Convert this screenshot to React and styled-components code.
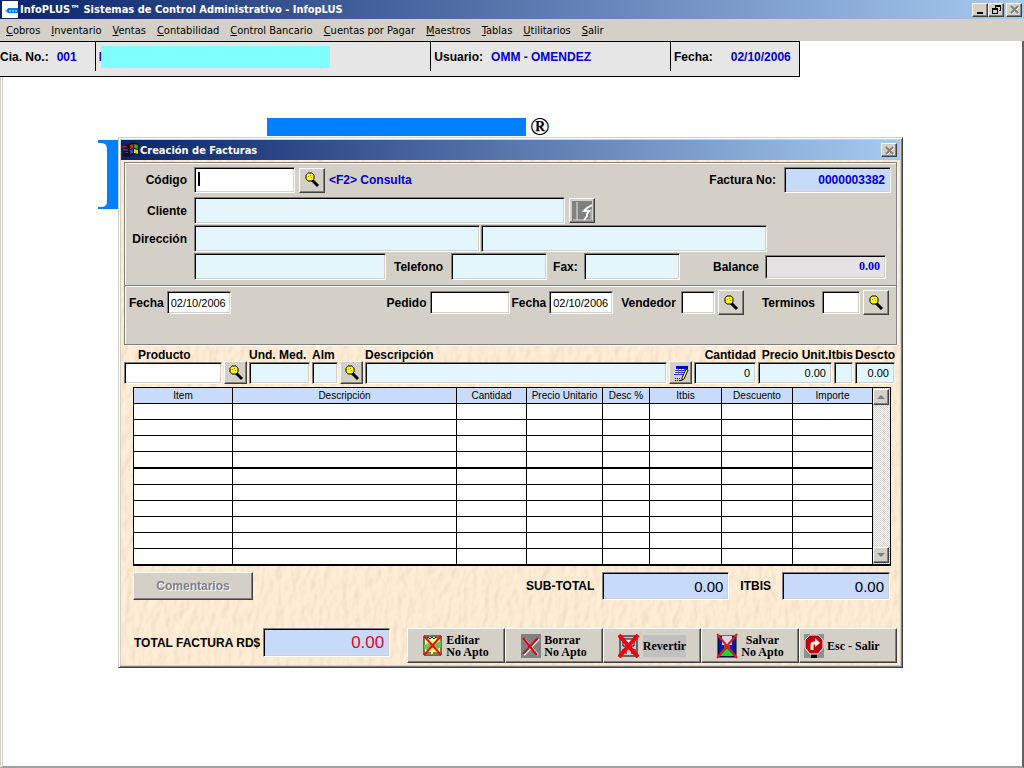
import React from 'react';
import styled, { createGlobalStyle, css } from 'styled-components';

const menus = [
  'Cobros',
  'Inventario',
  'Ventas',
  'Contabilidad',
  'Control Bancario',
  'Cuentas por Pagar',
  'Maestros',
  'Tablas',
  'Utilitarios',
  'Salir',
];

const columns = [
  { name: 'Item', width: 99 },
  { name: 'Descripción' },
  { name: 'Cantidad', width: 70 },
  { name: 'Precio Unitario', width: 76 },
  { name: 'Desc %', width: 47 },
  { name: 'Itbis', width: 72 },
  { name: 'Descuento', width: 71 },
  { name: 'Importe', width: 80 },
];

const rows = [1, 2, 3, 4, 5, 6, 7, 8, 9, 10];

function SearchIcon() {
  return (
    <svg width='16' height='16' viewBox='0 0 16 16'>
      <path d='M8 8l6 6' stroke='#000' strokeWidth='3' />
      <path
        d='M4 1h4l2 2v4L8 9H4L2 7V3z'
        fill='#ffff00'
        stroke='#000'
        strokeWidth='1'
      />
      <path d='M4 4h1v1H4zM6 3h1v1H6zM7 5h1v1H7z' fill='#808000' />
    </svg>
  );
}

function NoteIcon() {
  return (
    <svg width='18' height='18' viewBox='0 0 18 18' shapeRendering='crispEdges'>
      <path d='M4 2h12v3H4z' fill='#0000d0' />
      <path d='M3 5h12l-2 6H2z' fill='#fff' />
      <path d='M3 6h12M3 8h10M2 10h9' stroke='#2020c0' />
      <path d='M6 5v6M9 5v6M12 5v4' stroke='#6060d0' />
      <path d='M3 14h1M5 14h1M7 14h1M3 16h1M5 16h1M7 16h3' stroke='#000' />
      <path
        d='M14 5l2 1-4 9-2 1v-2z'
        fill='#ffffa0'
        stroke='#000'
        shapeRendering='auto'
      />
    </svg>
  );
}

function ClientIcon() {
  return (
    <svg width='20' height='20' viewBox='0 0 20 20'>
      <path d='M0 0h20v20H0z' fill='#808080' />
      <path d='M5 1v18' stroke='#e8e8e8' />
      <path d='M20 4l-5 3-3 3h5l-2 3v2l-3 4' fill='none' stroke='#fff' strokeWidth='2' />
      <path d='M19 8v11H1' fill='none' stroke='#d8d8d8' />
    </svg>
  );
}

function FlagIcon() {
  return (
    <svg width='17' height='16' viewBox='0 0 17 16'>
      <path d='M2 4l5-2 4-2 6 2v11l-5-1-5 3-6-1z' fill='#101018' />
      <path d='M8 3l3-1v4L8 7z' fill='#d02020' />
      <path d='M12 2l4 1v4l-4-1z' fill='#20a040' />
      <path d='M8 8l3-1v4l-3 1z' fill='#3048d0' />
      <path d='M12 7l4 1v4l-4-1z' fill='#e0d020' />
      <path d='M0 4h5v1H0zM1 7h5v1H1zM3 10h3v1H3z' fill='#a02020' />
      <path d='M0 5h4v1H0zM2 8h4v1H2z' fill='#2030a0' />
    </svg>
  );
}

function AppIcon() {
  return (
    <svg width='16' height='17' viewBox='0 0 16 17'>
      <path d='M0 0h16v17H0z' fill='#fff' />
      <path d='M6 7h10v5H6L4 10z' fill='#0080e0' />
      <path d='M7 10h2M10 10h2M13 10h2' stroke='#c0e8ff' />
      <path d='M3 10h2' stroke='#60b0f0' />
    </svg>
  );
}

function EditIcon() {
  return (
    <svg width='20' height='22' viewBox='0 0 20 22'>
      <path d='M1 1h17v19H1z' fill='#ffff90' stroke='#000' />
      <path d='M1 11l4-3 4 3 5-3 4-2v6l-5 3H5l-4-1z' fill='#60c850' />
      <path d='M3 4l2-2 2 2 2-2 2 2 2-2 3 2M3 18h5M10 18h6' stroke='#000' fill='none' />
      <path d='M5 13h9v3H5z' fill='#fff060' />
      <path d='M1 1l17 19M18 1L1 20' stroke='#e01010' strokeWidth='2' />
    </svg>
  );
}

function DeleteIcon() {
  return (
    <svg width='20' height='24' viewBox='0 0 20 24'>
      <path d='M0 0h20v24H0z' fill='#808080' />
      <path d='M3 5l14 16M18 5L3 21' stroke='#fff' strokeWidth='2' />
      <path d='M2 4l14 17M17 4L2 20' stroke='#e00010' strokeWidth='2' />
    </svg>
  );
}

function RevertIcon() {
  return (
    <svg width='22' height='24' viewBox='0 0 22 24'>
      <path d='M2 2h17v20H2z' fill='#c8c8c8' stroke='#000' />
      <path d='M5 5h11v7H5z' fill='#fff' stroke='#000' />
      <path d='M4 16h4v4M14 20v-4h4' stroke='#000' fill='none' />
      <path d='M1 1l19 22M20 1L1 23' stroke='#f00010' strokeWidth='4' />
    </svg>
  );
}

function SaveIcon() {
  return (
    <svg width='22' height='26' viewBox='0 0 22 26'>
      <path d='M2 3h18v21H2z' fill='#0818a8' stroke='#000' />
      <path d='M6 3h10v9H6z' fill='#d8d8e0' />
      <path d='M8 12h6v3H8z' fill='#5060b0' />
      <path d='M4 23l7-8 7 8z' fill='#10e020' />
      <path d='M1 1l20 24M21 1L1 25' stroke='#e81818' strokeWidth='2' />
    </svg>
  );
}

function ExitIcon() {
  return (
    <svg width='20' height='24' viewBox='0 0 20 24'>
      <path d='M0 0h20v24H0z' fill='#909090' />
      <path d='M7 20h6v4H7z' fill='#000' />
      <path d='M6 1h8l5 5v8l-5 6H6l-5-6V6z' fill='#c00010' stroke='#fff' />
      <path
        d='M8 16v-5q0-2 2-2h3'
        fill='none'
        stroke='#fff0d0'
        strokeWidth='3'
      />
      <path d='M11 4l5 5-5 4z' fill='#fff0d0' />
    </svg>
  );
}

function CloseIcon() {
  return (
    <svg width='9' height='9' viewBox='0 0 9 9'>
      <path d='M2 2l7 7M9 2L2 9' stroke='#fff' strokeWidth='1' />
      <path d='M1 1l7 7M8 1L1 8' stroke='#808080' strokeWidth='2' />
    </svg>
  );
}

// embossed paper drawn behind the form
function Paper() {
  return (
    <PaperSvg aria-hidden='true'>
      <filter
        id='paper'
        x='0'
        y='0'
        width='100%'
        height='100%'
        colorInterpolationFilters='sRGB'
      >
        <feTurbulence type='fractalNoise' baseFrequency='0.12 0.07' numOctaves='2' seed='4' />
        <feDiffuseLighting lightingColor='#ffebd2' surfaceScale='1' diffuseConstant='1.25'>
          <feDistantLight azimuth='210' elevation='53' />
        </feDiffuseLighting>
      </filter>
      <rect width='100%' height='100%' fill='#fdead2' />
      <rect width='100%' height='100%' filter='url(#paper)' opacity='0.25' />
    </PaperSvg>
  );
}

function Invoice() {
  return (
    <Dialog role='dialog' aria-labelledby='dialog-title'>
      <DialogTitle>
        <FlagIcon />
        <h2 id='dialog-title'>Creación de Facturas</h2>
        <CaptionButton aria-label='Cerrar'>
          <CloseIcon />
        </CaptionButton>
      </DialogTitle>
      <DialogBody>
        <Paper />
        <Client>
          <Line>
            <SideLabel htmlFor='codigo'>Código</SideLabel>
            <Field id='codigo' $w={101} $h={26} $caret />
            <ToolButton aria-label='Buscar cliente'>
              <SearchIcon />
            </ToolButton>
            <Hint>&lt;F2&gt; Consulta</Hint>
            <Push />
            <Label htmlFor='factura' $gap={4}>Factura No:</Label>
            <Field id='factura' $w={107} $h={26} $tone='blue' $bold readOnly defaultValue='0000003382' />
          </Line>
          <Line>
            <SideLabel htmlFor='cliente'>Cliente</SideLabel>
            <Field id='cliente' $w={371} $h={27} $tone='sky' readOnly />
            <ToolButton aria-label='Ficha del cliente'>
              <ClientIcon />
            </ToolButton>
          </Line>
          <Line>
            <SideLabel htmlFor='direccion'>Dirección</SideLabel>
            <Pair>
              <Field id='direccion' $w={286} $h={27} $tone='sky' readOnly />
              <Field aria-label='Dirección 2' $w={286} $h={27} $tone='sky' readOnly />
            </Pair>
          </Line>
          <Line>
            <SideLabel htmlFor='direccion3' aria-label='Dirección 3' />
            <Field id='direccion3' $w={192} $h={27} $tone='sky' readOnly />
            <Label htmlFor='telefono' $gap={4}>Telefono</Label>
            <Field id='telefono' $w={96} $h={27} $tone='sky' readOnly />
            <Label htmlFor='fax' $gap={2}>Fax:</Label>
            <Field id='fax' $w={96} $h={27} $tone='sky' readOnly />
            <Push />
            <Label htmlFor='balance' $gap={2}>Balance</Label>
            <Balance id='balance' $w={121} $h={24} $tone='gray' $bold readOnly defaultValue='0.00' />
          </Line>
        </Client>
        <Order>
          <Group>
            <Label htmlFor='fecha'>Fecha</Label>
            <Field id='fecha' $w={64} $h={23} $date defaultValue='02/10/2006' />
          </Group>
          <Push />
          <Group>
            <Label htmlFor='pedido'>Pedido</Label>
            <Field id='pedido' $w={80} $h={23} />
          </Group>
          <Group>
            <Label htmlFor='fecha-pedido'>Fecha</Label>
            <Field id='fecha-pedido' $w={64} $h={23} $date defaultValue='02/10/2006' />
          </Group>
          <Group $before={4}>
            <Label htmlFor='vendedor' $gap={2}>Vendedor</Label>
            <Field id='vendedor' $w={34} $h={23} />
            <ToolButton aria-label='Buscar vendedor'>
              <SearchIcon />
            </ToolButton>
          </Group>
          <Group $before={12}>
            <Label htmlFor='terminos' $gap={4}>Terminos</Label>
            <Field id='terminos' $w={38} $h={23} />
            <ToolButton aria-label='Buscar terminos'>
              <SearchIcon />
            </ToolButton>
          </Group>
        </Order>
        <Product>
          <Cell>
            <Label htmlFor='producto' $gap={14}>Producto</Label>
            <Field id='producto' $w='100%' $h={22} />
          </Cell>
          <SmallTool aria-label='Buscar producto'>
            <SearchIcon />
          </SmallTool>
          <Cell>
            <Label htmlFor='medida'>Und. Med.</Label>
            <Field id='medida' $w='100%' $h={22} $tone='sky' readOnly />
          </Cell>
          <Cell>
            <Label htmlFor='almacen'>Alm</Label>
            <Field id='almacen' $w='100%' $h={22} $tone='sky' readOnly />
          </Cell>
          <SmallTool aria-label='Buscar almacén'>
            <SearchIcon />
          </SmallTool>
          <Cell>
            <Label htmlFor='descripcion'>Descripción</Label>
            <Field id='descripcion' $w='100%' $h={22} $tone='sky' readOnly />
          </Cell>
          <SmallTool aria-label='Editar descripción'>
            <NoteIcon />
          </SmallTool>
          <Cell $align='flex-end'>
            <Label htmlFor='cantidad'>Cantidad</Label>
            <Field id='cantidad' $w='100%' $h={22} $tone='sky' $right defaultValue='0' />
          </Cell>
          <Cell $align='center'>
            <Label htmlFor='precio'>Precio Unit.</Label>
            <Field id='precio' $w='100%' $h={22} $tone='sky' $right defaultValue='0.00' />
          </Cell>
          <Cell $align='flex-end'>
            <Label htmlFor='itbis-linea'>Itbis</Label>
            <Field id='itbis-linea' $w='100%' $h={22} $tone='sky' readOnly />
          </Cell>
          <Cell $align='flex-end'>
            <Label htmlFor='descto'>Descto</Label>
            <Field id='descto' $w='100%' $h={22} $tone='sky' $right defaultValue='0.00' />
          </Cell>
        </Product>
        <Grid>
          <Table>
            <colgroup>
              {columns.map((col) => (
                <col key={col.name} width={col.width} />
              ))}
            </colgroup>
            <thead>
              <tr>
                {columns.map((col) => (
                  <th key={col.name}>{col.name}</th>
                ))}
              </tr>
            </thead>
            <tbody>
              {rows.map((row) => (
                <Row key={row} $thick={row === 4}>
                  {columns.map((col) => (
                    <td key={col.name} />
                  ))}
                </Row>
              ))}
            </tbody>
          </Table>
          <Scroll>
            <ScrollButton aria-label='Subir'>
              <svg width='8' height='4' viewBox='0 0 8 4'>
                <path d='M0 4l4-4 4 4z' fill='#808080' />
              </svg>
            </ScrollButton>
            <ScrollButton aria-label='Bajar'>
              <svg width='8' height='4' viewBox='0 0 8 4'>
                <path d='M0 0h8L4 4z' fill='#808080' />
              </svg>
            </ScrollButton>
          </Scroll>
        </Grid>
        <Summary>
          <Comments disabled>Comentarios</Comments>
          <Push />
          <Label htmlFor='subtotal'>SUB-TOTAL</Label>
          <Amount id='subtotal' $w={127} $h={28} $tone='blue' $right readOnly defaultValue='0.00' />
          <Label htmlFor='itbis' $gap={3}>ITBIS</Label>
          <Amount id='itbis' $w={108} $h={28} $tone='blue' $right readOnly defaultValue='0.00' />
        </Summary>
        <Footer>
          <Group>
            <Label htmlFor='total'>TOTAL FACTURA RD$</Label>
            <Total id='total' $w={127} $h={29} $tone='blue' $right readOnly defaultValue='0.00' />
          </Group>
          <Actions>
            <Action>
              <EditIcon />
              <span>Editar<br />No Apto</span>
            </Action>
            <Action>
              <DeleteIcon />
              <span>Borrar<br />No Apto</span>
            </Action>
            <Action $shade>
              <RevertIcon />
              <span>Revertir</span>
            </Action>
            <Action $center>
              <SaveIcon />
              <span>Salvar<br />No Apto</span>
            </Action>
            <Action $start>
              <ExitIcon />
              <span>Esc - Salir</span>
            </Action>
          </Actions>
        </Footer>
      </DialogBody>
    </Dialog>
  );
}

function App() {
  return (
    <Screen>
      <GlobalStyle />
      <TitleBar>
        <AppIcon />
        <h1>InfoPLUS™ Sistemas de Control Administrativo - InfopLUS</h1>
        <Captions>
          <CaptionButton aria-label='Minimizar'>
            <svg width='9' height='9' viewBox='0 0 9 9'>
              <path d='M1 7h6v2H1z' />
            </svg>
          </CaptionButton>
          <CaptionButton aria-label='Restaurar'>
            <svg width='9' height='9' viewBox='0 0 9 9' shapeRendering='crispEdges'>
              <path d='M3 0h6v6H7V5h1V2H4v1H3zM0 3h6v6H0zM1 5v3h4V5z' fillRule='evenodd' />
            </svg>
          </CaptionButton>
        </Captions>
        <CaptionButton aria-label='Cerrar'>
          <CloseIcon />
        </CaptionButton>
      </TitleBar>
      <MenuBar>
        {menus.map((menu) => (
          <MenuItem key={menu}>
            <u>{menu[0]}</u>
            {menu.slice(1)}
          </MenuItem>
        ))}
      </MenuBar>
      <Desktop>
        <Info>
          <InfoCell>
            Cia. No.: <b>001</b>
          </InfoCell>
          <InfoCell>
            <b>I</b>
            <Company />
          </InfoCell>
          <InfoCell>
            Usuario: <b>OMM - OMENDEZ</b>
          </InfoCell>
          <InfoCell $spread>
            Fecha: <b>02/10/2006</b>
          </InfoCell>
        </Info>
        <Brand>
          <svg width='428' height='91' viewBox='0 0 428 91'>
            <path d='M169 0h259v18H169z' fill='#0080ff' />
            <path
              d='M0 22h40v69H0v-2h3q6 0 6-6V31q0-6-6-6H0z'
              fill='#0080ff'
            />
          </svg>
          <span>®</span>
        </Brand>
        <Invoice />
      </Desktop>
    </Screen>
  );
}

const GlobalStyle = createGlobalStyle`
  * {
    box-sizing: border-box;
  }
  body {
    margin: 0;
    background: #fff;
    color: #000;
    font-family: "Liberation Sans", Arial, sans-serif;
    font-size: 12px;
  }
  button, input {
    font-family: inherit;
    font-size: inherit;
    color: inherit;
    border-radius: 0;
    margin: 0;
    padding: 0;
  }
  svg {
    display: block;
    flex: none;
  }
`;

const raised = css`
  background: #d4d0c8;
  border: 1px solid;
  border-color: #fff #404040 #404040 #fff;
  box-shadow: inset -1px -1px 0 #808080;
`;

const Screen = styled.div`
  display: flex;
  flex-direction: column;
  min-height: 100vh;
`;

const TitleBar = styled.header`
  display: flex;
  align-items: center;
  height: 19px;
  padding: 0 2px;
  background: linear-gradient(to right, #0a246a, #a6caf0);
  h1 {
    flex: 1;
    margin: 0 0 0 2px;
    color: #fff;
    font: bold 11px "DejaVu Sans Condensed", Tahoma, sans-serif;
    white-space: nowrap;
  }
`;

const Captions = styled.div`
  display: flex;
  margin-right: 2px;
`;

const CaptionButton = styled.button`
  ${raised}
  display: flex;
  align-items: center;
  justify-content: center;
  width: 16px;
  height: 14px;
`;

const MenuBar = styled.nav`
  display: flex;
  align-items: center;
  gap: 11px;
  height: 22px;
  padding: 0 6px;
  background: #d4d0c8;
`;

const MenuItem = styled.button`
  border: 0;
  background: none;
  font-family: "DejaVu Sans Condensed", Tahoma, sans-serif;
  font-size: 11px;
  white-space: nowrap;
`;

const Desktop = styled.main`
  position: relative;
  flex: 1;
  min-height: 640px;
  border-left: 3px double #d4d0c8;
  border-right: 2px solid #606060;
  border-bottom: 2px solid #a0a0a0;
`;

const Info = styled.section`
  display: grid;
  grid-template-columns: 95fr 336fr 240fr 129fr;
  width: calc(78% + 5px);
  height: 36px;
  margin-left: -3px;
  border: 1px solid #000;
  border-left: 0;
  background: #e6e6e6;
`;

const InfoCell = styled.div`
  display: flex;
  align-items: center;
  justify-content: ${(props) => (props.$spread ? 'space-between' : 'flex-start')};
  gap: 8px;
  height: 29px;
  padding-right: ${(props) => (props.$spread ? '8px' : 0)};
  font-weight: bold;
  white-space: nowrap;
  & + & {
    padding-left: 3px;
    border-left: 1px solid #000;
  }
  b {
    color: #0000d8;
  }
`;

const Company = styled.div`
  width: 69%;
  height: 22px;
  margin-left: -9px;
  background: #80ffff;
`;

const Brand = styled.div`
  position: absolute;
  top: 77px;
  left: 95px;
  display: flex;
  gap: 4px;
  span {
    font: bold 26px/18px "Liberation Serif", serif;
  }
`;

const Dialog = styled.section`
  position: absolute;
  top: 96px;
  left: 115px;
  right: 119px;
  min-width: 785px;
  padding: 2px;
  background: #d4d0c8;
  border: 1px solid;
  border-color: #d4d0c8 #404040 #404040 #d4d0c8;
  box-shadow: inset 1px 1px 0 #fff, inset -1px -1px 0 #808080;
`;

const DialogTitle = styled.header`
  display: flex;
  align-items: center;
  height: 20px;
  padding: 0 3px 0 1px;
  background: linear-gradient(to right, #0a246a, #a6caf0);
  h2 {
    flex: 1;
    margin: 0 0 0 1px;
    color: #fff;
    font: bold 11px "DejaVu Sans Condensed", Tahoma, sans-serif;
  }
`;

const DialogBody = styled.form`
  position: relative;
  isolation: isolate;
  padding: 2px 3px 2px;
`;

const PaperSvg = styled.svg`
  position: absolute;
  inset: 0;
  width: 100%;
  height: 100%;
  z-index: -1;
`;

const Client = styled.div`
  display: flex;
  flex-direction: column;
  gap: 1px;
  height: 124px;
  padding: 4px 5px 3px 0;
  background: #d4d0c8;
  border: 1px solid #808080;
  box-shadow: inset 1px 1px 0 #fff, 1px 0 0 #fff;
`;

const Line = styled.div`
  display: flex;
  align-items: center;
  gap: 4px;
  &:first-child {
    margin-bottom: 3px;
  }
`;

const Pair = styled.div`
  display: flex;
  gap: 1px;
`;

const Order = styled.div`
  display: flex;
  align-items: flex-start;
  gap: 2px;
  height: 59px;
  padding: 4px 7px 0 4px;
  background: #d4d0c8;
  border: 1px solid #808080;
  border-top: 0;
  box-shadow: inset 1px 1px 0 #fff, 1px 1px 0 #fff;
`;

const Group = styled.div`
  display: flex;
  align-items: center;
  gap: 3px;
  min-height: 25px;
  margin-left: ${(props) => props.$before || 0}px;
`;

const Push = styled.span`
  flex: 1;
`;

const Label = styled.label`
  margin: 0 ${(props) => props.$gap || 0}px;
  font-weight: bold;
  line-height: 14px;
  white-space: nowrap;
`;

const SideLabel = styled(Label)`
  flex: none;
  width: 62px;
  margin-right: 3px;
  text-align: right;
`;

const Hint = styled.span`
  color: #0000d8;
  font-weight: bold;
`;

const tones = { blue: '#c8dafa', sky: '#e2f6fc', gray: '#e4e2e2' };

const Field = styled.input`
  width: ${(props) => (typeof props.$w === 'number' ? `${props.$w}px` : props.$w)};
  height: ${(props) => props.$h}px;
  padding: 0 5px 0 3px;
  background: ${(props) => tones[props.$tone] || '#fff'};
  border: 1px solid;
  border-color: #808080 #fff #fff #808080;
  box-shadow: inset 1px 1px 0 #000, inset -1px -1px 0 #d4d0c8;
  font-size: 11px;
  text-align: ${(props) => (props.$bold || props.$right ? 'right' : 'left')};
  ${(props) =>
    props.$bold &&
    css`
      color: #0000d8;
      font-weight: bold;
      font-size: 12px;
    `}
  ${(props) =>
    props.$date &&
    css`
      padding: 0 0 0 3px;
    `}
  ${(props) =>
    props.$caret &&
    css`
      background: linear-gradient(#000, #000) 3px 4px / 2px 14px no-repeat #fff;
    `}
`;

const Balance = styled(Field)`
  margin-right: 5px;
  font-family: "Liberation Serif", serif;
`;

const Amount = styled(Field)`
  font-size: 15px;
`;

const Total = styled(Field)`
  color: #f00020;
  font-size: 17px;
`;

const ToolButton = styled.button.attrs({ type: 'button' })`
  ${raised}
  display: flex;
  flex: none;
  align-items: center;
  justify-content: center;
  width: 26px;
  height: 25px;
`;

const SmallTool = styled(ToolButton)`
  width: 23px;
  height: 23px;
`;

const Product = styled.div`
  display: grid;
  grid-template-columns: 98px 23px 61px 26px 23px 1fr 23px 62px 74px 19px 40px;
  gap: 2px;
  align-items: end;
  margin-top: 3px;
  padding-right: 2px;
`;

const Cell = styled.div`
  display: flex;
  flex-direction: column;
  align-items: ${(props) => props.$align || 'flex-start'};
  min-width: 0;
`;

const Grid = styled.div`
  display: flex;
  margin: 3px 6px 0 9px;
  border: 1px solid #000;
  border-bottom-width: 2px;
  background: #fff;
`;

const Table = styled.table`
  flex: 1;
  table-layout: fixed;
  border-spacing: 0;
  th,
  td {
    height: 16px;
    padding: 0;
    border-right: 1px solid #000;
    border-bottom: 1px solid #000;
  }
  th {
    background: #c8dcfa;
    font-weight: normal;
    font-size: 10px;
    line-height: 14px;
    white-space: nowrap;
  }
  tr:last-child td {
    height: 15px;
    border-bottom: 0;
  }
  thead th {
    border-bottom: 1px solid #000;
  }
`;

const Row = styled.tr`
  && td {
    ${(props) => props.$thick && 'height: 17px; border-bottom-width: 2px;'}
  }
`;

const Scroll = styled.div`
  display: flex;
  flex-direction: column;
  justify-content: space-between;
  width: 17px;
  padding: 1px 0;
  background: repeating-conic-gradient(#d4d0c8 0 25%, #fff 0 50%) 0 0 / 2px 2px;
`;

const ScrollButton = styled.button.attrs({ type: 'button' })`
  ${raised}
  display: flex;
  align-items: center;
  justify-content: center;
  width: 16px;
  height: 16px;
`;

const Summary = styled.div`
  display: flex;
  align-items: center;
  gap: 8px;
  margin: 6px 7px 0 9px;
`;

const Comments = styled.button`
  ${raised}
  width: 120px;
  height: 28px;
  color: #808080;
  font-weight: bold;
  text-shadow: 1px 1px 0 #fff;
`;

const Footer = styled.div`
  display: flex;
  align-items: flex-start;
  justify-content: space-between;
  margin-top: 28px;
  padding-left: 10px;
`;

const Actions = styled.div`
  display: grid;
  grid-template-columns: repeat(5, 98px);
`;

const Action = styled.button.attrs({ type: 'button' })`
  ${raised}
  display: flex;
  align-items: center;
  justify-content: ${(props) => (props.$start ? 'flex-start' : 'center')};
  gap: 3px;
  height: 35px;
  padding: 0 4px;
  font: bold 12px/12px "Liberation Serif", serif;
  text-align: ${(props) => (props.$center ? 'center' : 'left')};
  white-space: nowrap;
  span {
    padding: ${(props) => (props.$shade ? '5px 0' : 0)};
    background: ${(props) => (props.$shade ? '#c0c0c0' : 'none')};
  }
`;

export default App;
